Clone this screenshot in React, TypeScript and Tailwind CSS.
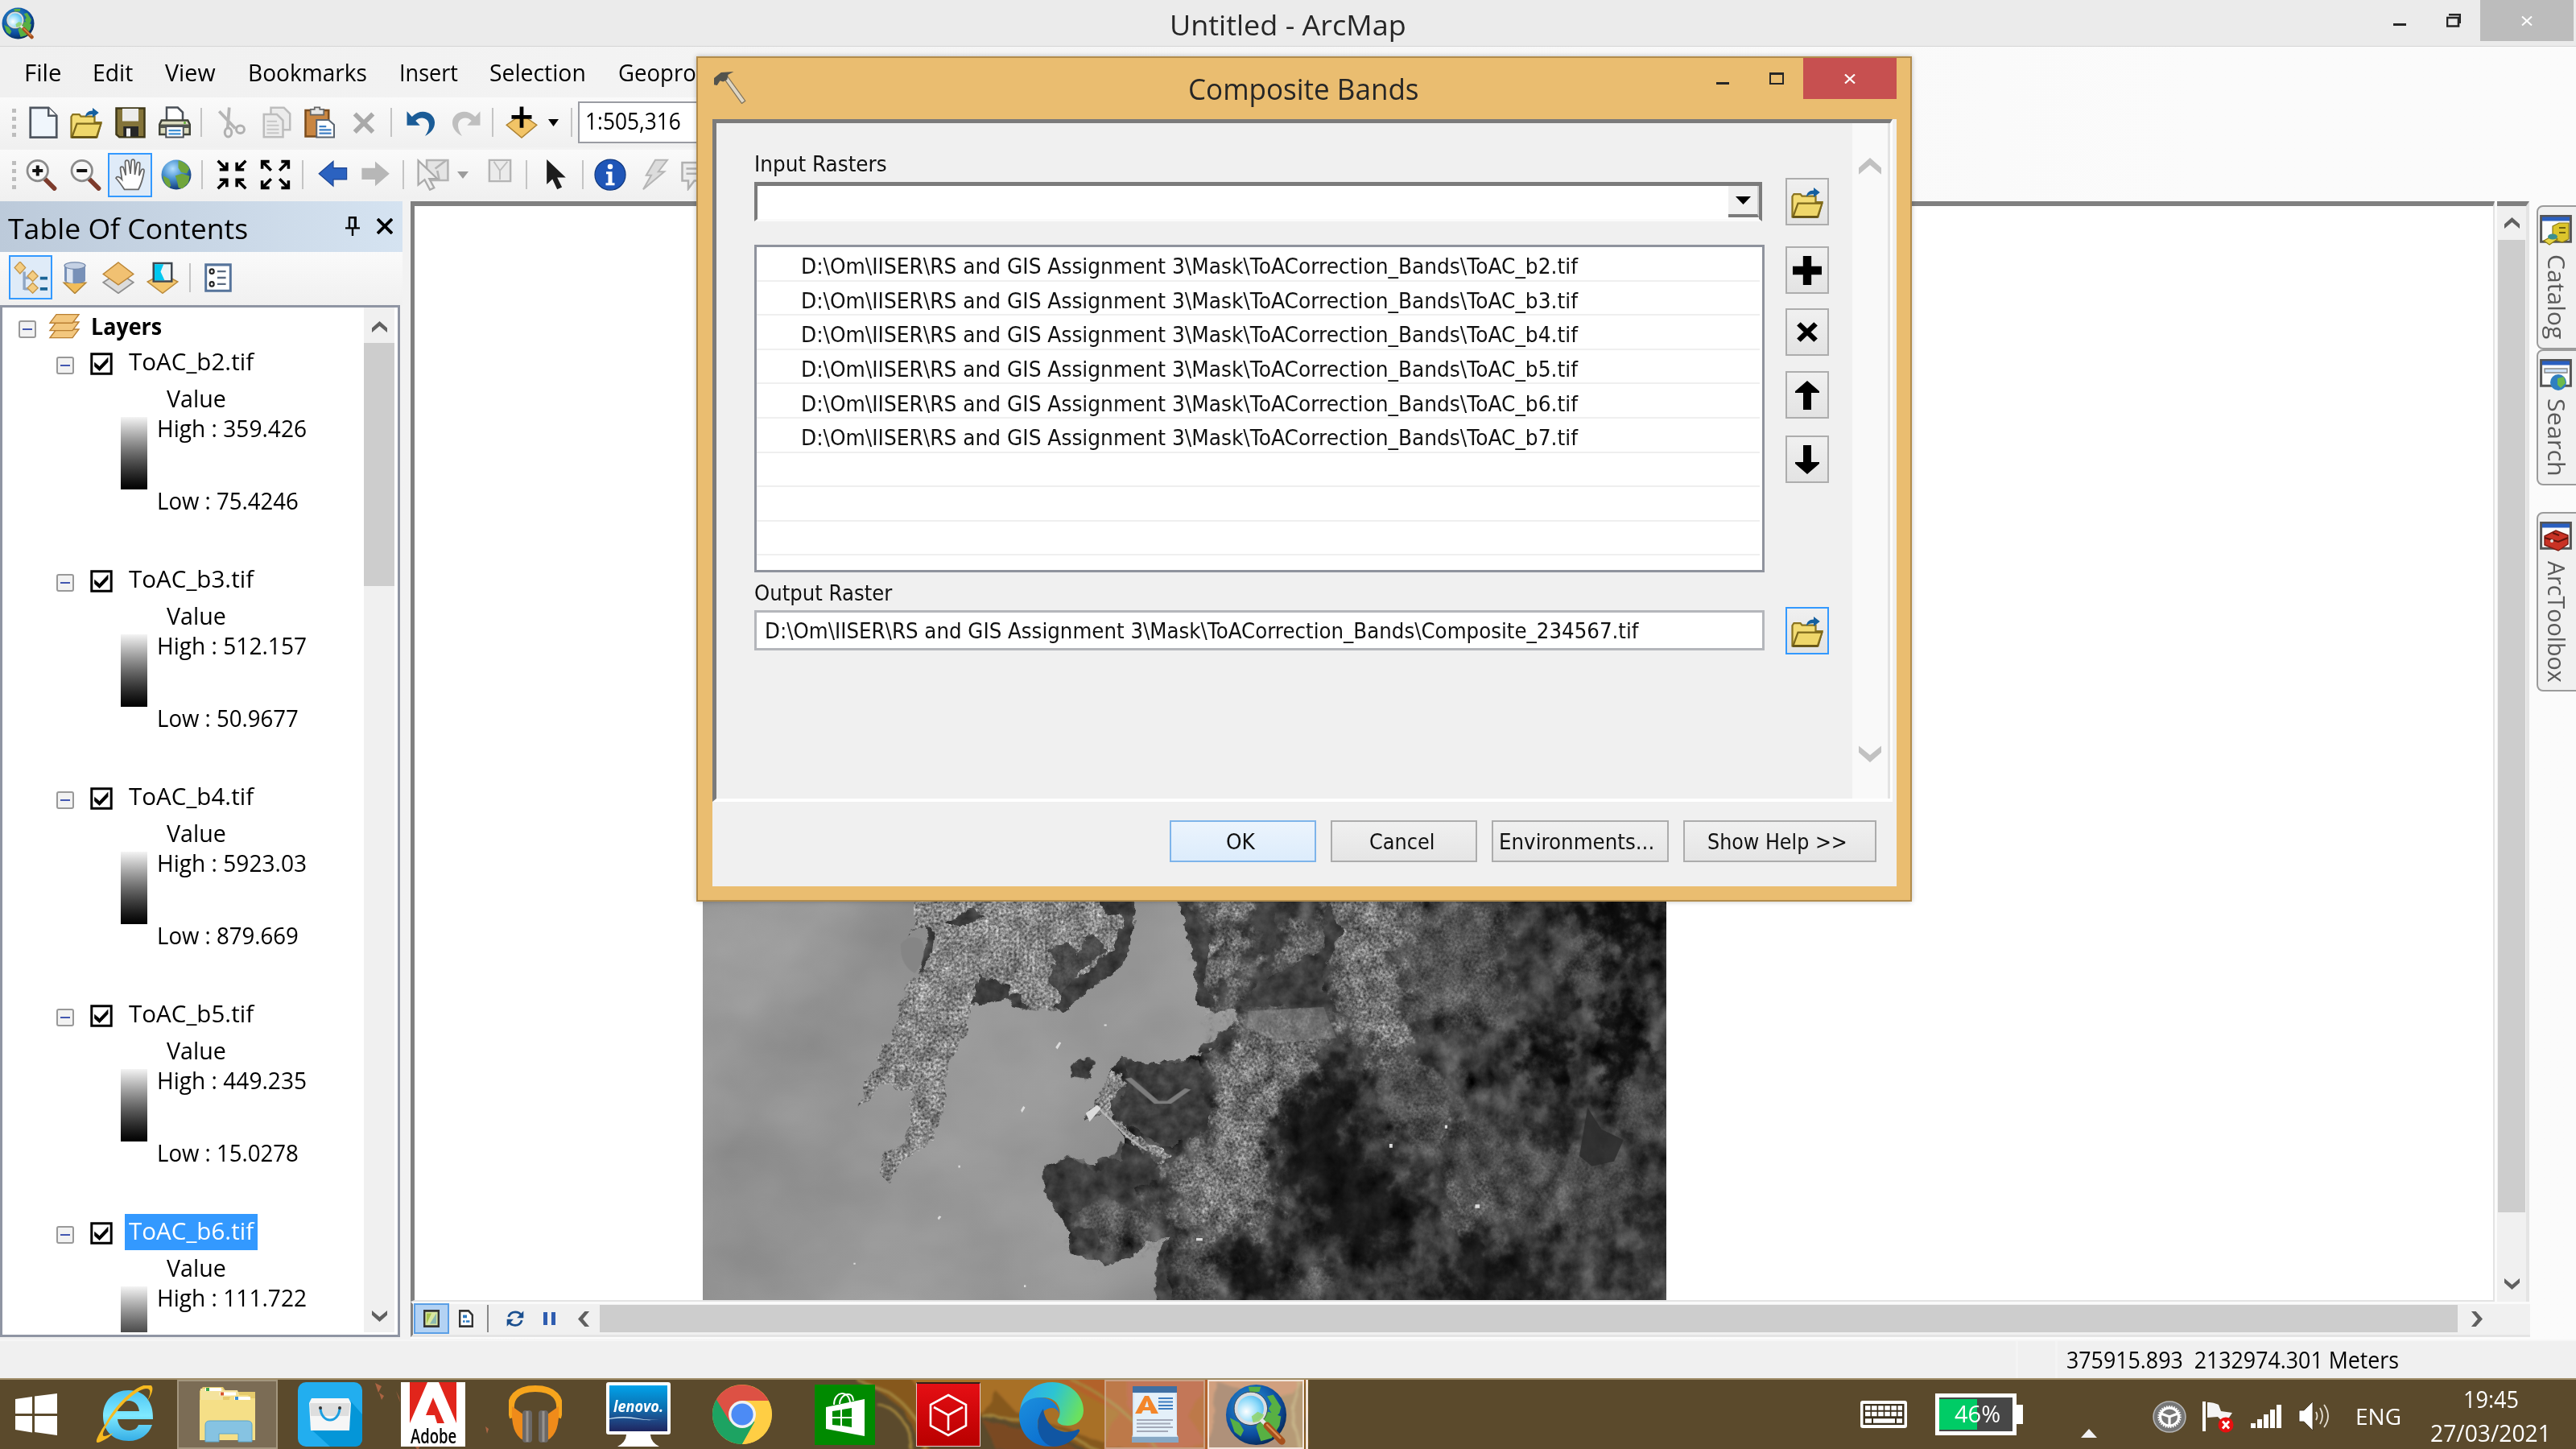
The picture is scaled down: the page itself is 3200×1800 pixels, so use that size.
import React, { useLayoutEffect, useRef } from 'react';

const UI = "font-['Open_Sans','Noto_Sans',sans-serif]";
const TAHOMA = "font-['DejaVu_Sans',sans-serif]";

/* Single line of text condensed or widened to an exact measure. */
function Fit({ w, className = '', children }: { w: number; className?: string; children: React.ReactNode }) {
  const ref = useRef<HTMLSpanElement>(null);
  useLayoutEffect(() => {
    const el = ref.current;
    if (el) el.style.transform = `scaleX(${w / el.offsetWidth})`;
  }, [w]);
  return (
    <span className={`block shrink-0 whitespace-pre ${className}`} style={{ width: w }}>
      <span ref={ref} className="inline-block origin-left">{children}</span>
    </span>
  );
}

function Svg({ className = '', vb = '0 0 16 16', children }: { className?: string; vb?: string; children: React.ReactNode }) {
  return (
    <svg viewBox={vb} preserveAspectRatio="none" className={`block shrink-0 ${className}`}>
      {children}
    </svg>
  );
}

const Sep = ({ className = '' }: { className?: string }) => <div className={`w-[2px] h-[36px] shrink-0 bg-[#c4c4c4] ${className}`} />;

const Grip = () => (
  <div className="flex w-[5px] shrink-0 flex-col gap-[5px] ml-[15px]">
    {[0, 1, 2, 3].map((i) => <div key={i} className="h-[5px] w-[5px] bg-[#bdbdbd]" />)}
  </div>
);

const Folder = ({ className = '' }: { className?: string }) => (
  <Svg className={className}>
    <path d="M.6 15.3V5.2L1.4 4h3.2l.8 1h6.8v3H15.4l-2 7.3z" fill="#f3dc74" stroke="#8a7420" strokeWidth=".9" />
    <path d="M1 15.2L3.4 8.600H15.400L13.200 15.200z" fill="#efd76a" stroke="#7d681a" strokeWidth=".9" />
    <path d="M.7 15.400H13.300" stroke="#5e4d10" strokeWidth=".9" />
    <path d="M7.6 5.4c.1-2 1.4-3.2 3.6-3.2V.8L14.3 3.2 11.2 5.6V4.1c-1.700-.1-2.600.3-3.600 1.300z" fill="#145f9f" />
  </Svg>
);

const Globe = ({ id }: { id: string }) => (
  <>
    <defs>
      <radialGradient id={id} cx=".38" cy=".3" r=".75">
        <stop offset="0" stopColor="#b4e0ff" /><stop offset=".45" stopColor="#4a93d2" /><stop offset="1" stopColor="#0b2f6e" />
      </radialGradient>
    </defs>
    <circle cx="8" cy="8" r="7.400" fill={`url(#${id})`} />
    <path d="M9 1c2 .2 4.500 1.800 5.500 4l-1.300 2.400-2.800-.6-1.400-2.200z M7.500 8.500l3.300-1 3.800 1.200-.6 3.300-2.900 2.900-2-.4-.6-2.800z M1.500 8.500l3 1.700.8 3.300-.9.900C2.500 13 1.500 11 1.500 8.500z" fill="#6fa53c" />
  </>
);

const ArcGlobe = ({ className, id }: { className: string; id: string }) => (
  <Svg className={className} vb="0 0 40 40">
    <defs>
      <radialGradient id={id} cx=".4" cy=".35" r=".7"><stop offset="0" stopColor="#2b9be0" /><stop offset=".7" stopColor="#0c4b9c" /><stop offset="1" stopColor="#05254f" /></radialGradient>
      <radialGradient id={`${id}l`} cx=".35" cy=".6" r=".7"><stop offset="0" stopColor="#fff" /><stop offset=".6" stopColor="#8ddafa" /><stop offset="1" stopColor="#46b2ea" /></radialGradient>
    </defs>
    <circle cx="20" cy="20" r="19.500" fill={`url(#${id})`} />
    <path d="M27 8l4-1 5 8-1 4-3 3-4-6 2-3zM23 20l5-2 8 3-1 6-5 8-7 2-3-9zM3 22l6 3 3 5-2 4-4-3zM15 2l8 0-1 3-6 1z" fill="#58b043" />
    <circle cx="16.500" cy="16" r="9.500" fill={`url(#${id}l)`} stroke="#d9dde0" strokeWidth="2.200" />
    <path d="M17 21l4-3 4 2-2 4-5 1z" fill="#8fd25e" opacity=".8" />
    <circle cx="16.500" cy="16" r="10.800" fill="none" stroke="#454b52" strokeWidth=".5" />
    <path d="M23 23l4 4" stroke="#e6e6e6" strokeWidth="2.600" />
    <path d="M27 27l9.500 10" stroke="#a6501c" strokeWidth="4.600" strokeLinecap="round" />
    <path d="M27 26.500l8.500 8.500" stroke="#dd8f52" strokeWidth="1.200" strokeLinecap="round" />
  </Svg>
);

function Magnifier({ className = '', plus }: { className?: string; plus?: boolean }) {
  return (
    <Svg className={className}>
      <path d="M10 10.200l4.600 4.600" stroke="#7d3b2c" strokeWidth="2.300" strokeLinecap="round" />
      <circle cx="6.300" cy="6" r="5.100" fill="#f7f7f7" stroke="#8b8b8b" strokeWidth="1.100" />
      <path d={plus ? 'M3.700 6h5.200M6.300 3.400v5.200' : 'M3.700 6h5.200'} stroke="#111" strokeWidth="1.600" />
    </Svg>
  );
}

const corner = 'M.3 .3L4.500 4.500M5 1.200V5H1.200';
function TopToolbar() {
  return (
    <div className="flex h-[62px] w-full items-center bg-linear-to-b from-[#fafafa] to-[#f0f0f0]">
      <Grip />
      <Svg className="ml-[14px] h-[40px] w-[40px]"><path d="M1.500 .7h9l4 4v10.700h-13z" fill="#f0f6fc" stroke="#4f5660" strokeWidth="1.100" /><path d="M10.500 .7v4h4" fill="#fff" stroke="#4f5660" /></Svg>
      <Folder className="ml-[13px] h-[40px] w-[40px]" />
      <Svg className="ml-[15px] h-[40px] w-[40px]"><path d="M1 1h14v14.300H2.500L1 14z" fill="#84743a" stroke="#3f3818" /><path d="M4 1.200h8v6.200H4z" fill="#ececec" /><path d="M4.500 10h7.500v5H4.500z" fill="#262626" /><path d="M6 11h2v4H6z" fill="#eee" /></Svg>
      <Svg className="ml-[15px] h-[40px] w-[40px]"><path d="M4 .6h5.500L12 3v5H4z" fill="#fff" stroke="#4a5058" /><path d="M1.500 7h13l1 2v5h-15V9z" fill="#dcdcc0" stroke="#3f4238" /><path d="M.7 9h14.600v1.800H.7z" fill="#53564c" /><circle cx="13" cy="8.200" r=".6" fill="#5cb52e" /><path d="M3.700 10h8.600v5.400H3.700z" fill="#fff" stroke="#4a5058" strokeWidth=".8" /><path d="M5 12h6M5 13.700h6" stroke="#3f8fd3" strokeWidth=".9" /></Svg>
      <Sep className="ml-[12px]" />
      <Svg className="ml-[15px] h-[40px] w-[40px]"><path d="M2.500 2.500l8 8.500M7.500 .6L6.700 11" stroke="#b5b5b5" strokeWidth="1.500" fill="none" /><ellipse cx="7" cy="13" rx="1.700" ry="2.200" fill="none" stroke="#b0b0b0" strokeWidth="1.200" /><ellipse cx="13" cy="11.500" rx="2" ry="1.900" fill="none" stroke="#b0b0b0" strokeWidth="1.200" /></Svg>
      <Svg className="ml-[18px] h-[40px] w-[40px]"><path d="M5 .7h6.500l3 3v8H5z" fill="#ececec" stroke="#bdbdbd" /><path d="M1.500 4H8l3 3v8.300H1.500z" fill="#ececec" stroke="#bdbdbd" /><path d="M3 7.500h5M3 9.500h6M3 11.500h6M3 13.300h6" stroke="#c6c6c6" strokeWidth=".8" /></Svg>
      <Svg className="ml-[13px] h-[40px] w-[40px]"><path d="M1 2h11.500v13H1z" fill="#c98642" stroke="#7b4c1d" /><path d="M3.500 1.500h2V.5h2.600v1h2v2.700H3.500z" fill="#e6e6e6" stroke="#666" strokeWidth=".7" /><path d="M6.500 6.800h6l2.700 2.400v6.200H6.500z" fill="#fff" stroke="#5a6470" strokeWidth=".8" /><path d="M7.800 10h3.500M7.800 11.700h6M7.800 13.400h6" stroke="#3f7fc4" strokeWidth=".9" /></Svg>
      <Svg className="ml-[15px] h-[40px] w-[40px]"><path d="M3.500 3.800l9 9M12.500 3.800l-9 9" stroke="#a9a9a9" strokeWidth="2.300" /></Svg>
      <Sep className="ml-[13px]" />
      <Svg className="ml-[16px] h-[40px] w-[40px]"><path d="M1 2.500v7h6.500L5.300 7.200C8 4.500 12 6 12 9.500c0 2-.8 3.400-2 5.300 3-1.600 5-4 4.800-7C14.500 3 8 .5 3.500 5.200z" fill="#1b5c97" /></Svg>
      <Svg className="ml-[16px] h-[40px] w-[40px]"><path d="M15 2.500v7H8.500l2.200-2.300C8 4.500 4 6 4 9.500c0 2 .8 3.400 2 5.300-3-1.600-5-4-4.800-7C1.500 3 8 .5 12.500 5.200z" fill="#bfbfbf" /></Svg>
      <Sep className="ml-[12px]" />
      <Svg className="ml-[15px] h-[40px] w-[40px]"><path d="M8 4l7.500 5.300L8 15.600.5 9.300z" fill="#f2c467" stroke="#ad8232" strokeWidth=".6" /><path d="M8 .2v10.500M3 5.300h10" stroke="#000" strokeWidth="1.900" /></Svg>
      <Svg className="ml-[13px] h-[9px] w-[13px]" vb="0 0 10 6"><path d="M0 0h10L5 6z" fill="#000" /></Svg>
      <Sep className="ml-[15px]" />
      <div className="ml-[7px] flex h-[52px] w-[300px] shrink-0 items-center border-2 border-[#9a9ca3] bg-white pl-[7px] text-[30px] leading-[44px]">
        <Fit w={119} className="-mt-[4px]">1:505,316</Fit>
      </div>
    </div>
  );
}

function ToolsToolbar() {
  return (
    <div className="mt-[3px] flex h-[62px] w-full items-center bg-linear-to-b from-[#fafafa] to-[#f0f0f0]">
      <Grip />
      <Magnifier plus className="ml-[11px] h-[40px] w-[40px]" />
      <Magnifier className="ml-[15px] h-[40px] w-[40px]" />
      <div className="ml-[8px] flex h-[55px] w-[55px] shrink-0 items-center justify-center border-2 border-[#3399ff] bg-[#dfebf8]">
        <Svg className="h-[40px] w-[40px]"><path d="M5 15.300C3.500 13 2 11 .8 9.700c.4-1 1.600-.9 3 .7L3 5c0-1.300 1.400-1.300 1.700 0l1 3.300-.3-6.500c.1-1.300 1.600-1.300 1.800 0L8 7.600l.5-6.300C8.700.1 10 .2 10.100 1.400L10.200 8l1-5.400c.3-1.100 1.600-.9 1.500.3l-.4 5.600 1.100-2.700c.5-1 1.600-.6 1.400.5-.6 3.500-1.400 6.500-2.800 9z" fill="#fff" stroke="#666" strokeWidth=".7" /></Svg>
      </div>
      <Svg className="ml-[10px] h-[40px] w-[40px]"><Globe id="gTool" /></Svg>
      <Sep className="ml-[11px]" />
      {[true, false].map((inward) => (
        <Svg key={String(inward)} className={inward ? 'ml-[17px] h-[38px] w-[38px]' : 'ml-[16px] h-[38px] w-[38px]'} vb="0 0 16 16">
          <g fill="none" stroke="#000" strokeWidth="1.500">
            {inward ? (
              <><path d={corner} transform="translate(.4 .4)" /><path d={corner} transform="matrix(-1 0 0 1 15.600 .4)" /><path d={corner} transform="matrix(1 0 0 -1 .4 15.600)" /><path d={corner} transform="matrix(-1 0 0 -1 15.600 15.600)" /></>
            ) : (
              <><path d={corner} transform="matrix(-1 0 0 -1 6.100 6.100)" /><path d={corner} transform="matrix(1 0 0 -1 9.900 6.100)" /><path d={corner} transform="matrix(-1 0 0 1 6.100 9.900)" /><path d={corner} transform="translate(9.900 9.900)" /></>
            )}
          </g>
        </Svg>
      ))}
      <Sep className="ml-[14px]" />
      <Svg className="ml-[18px] h-[38px] w-[38px]"><path d="M.5 7.500L8 1v3.500h7v6H8v3.500z" fill="#2b62c0" stroke="#1c4594" strokeWidth=".5" /></Svg>
      <Svg className="ml-[14px] h-[38px] w-[38px]"><path d="M15.500 7.500L8 1v3.500H1v6h7v3.500z" fill="#b7b7b7" /></Svg>
      <Sep className="ml-[15px]" />
      <Svg className="ml-[15px] h-[40px] w-[42px]"><path d="M5 .8h10v10H5z" fill="#e4e4e4" stroke="#b4b4b4" /><path d="M9 5l5-4M10 6l1 5" stroke="#b4b4b4" /><path d="M1 1v12l3-2.500 2.500 5 2-1L6.200 10H10z" fill="#efefef" stroke="#aaa" strokeWidth=".9" /></Svg>
      <Svg className="ml-[9px] h-[9px] w-[14px]" vb="0 0 10 6"><path d="M0 0h10L5 6z" fill="#9c9c9c" /></Svg>
      <Svg className="ml-[24px] mb-[10px] h-[30px] w-[30px]"><path d="M1 1h14v14H1z" fill="#ebebeb" stroke="#b4b4b4" strokeWidth="1.300" /><path d="M4 2l4 6 5-6M8 8v6" stroke="#bdbdbd" fill="none" /></Svg>
      <Sep className="ml-[17px]" />
      <Svg className="ml-[23px] h-[38px] w-[26px]" vb="0 0 11 16"><path d="M.5 0v13l3-2.700L6 15.700l2.500-1.200L6 9.500h4.500z" fill="#1d1d1d" /></Svg>
      <Sep className="ml-[19px]" />
      <Svg className="ml-[13px] h-[40px] w-[40px]"><circle cx="8" cy="8" r="7.600" fill="#1f56b8" stroke="#123a80" strokeWidth=".5" /><circle cx="8" cy="4" r="1.300" fill="#fff" /><path d="M6 6.500h3v5.600h1.200v1.200H5.800v-1.200H7V7.700H6z" fill="#fff" /></Svg>
      <Svg className="ml-[16px] h-[40px] w-[40px]"><path d="M8 .7h6L9.500 6.500h3L2 15.300 6 8.300H3.500z" fill="#dcdcdc" stroke="#b5b5b5" strokeWidth=".8" /></Svg>
      <Svg className="ml-[11px] h-[40px] w-[40px]"><path d="M1 2h13v9H7l-3 4v-4H1z" fill="#ececec" stroke="#b0b0b0" /><path d="M3 5h8M3 7.500h8" stroke="#b0b0b0" /></Svg>
    </div>
  );
}

const Minus = ({ className = '' }: { className?: string }) => (
  <div className={`flex h-[22px] w-[22px] shrink-0 items-center justify-center rounded-[3px] border-2 border-[#999] bg-[#f2f2f2] ${className}`}>
    <div className="h-[2px] w-[12px] bg-[#4257b0]" />
  </div>
);

const Chevron = ({ className = '', color = '#606060' }: { className?: string; color?: string }) => (
  <Svg className={className} vb="0 0 20 16"><path d="M0 15V9L10 0l10 9v6L10 6.500z" fill={color} /></Svg>
);

const layers = [
  { name: 'ToAC_b2.tif', high: '359.426', low: '75.4246' },
  { name: 'ToAC_b3.tif', high: '512.157', low: '50.9677' },
  { name: 'ToAC_b4.tif', high: '5923.03', low: '879.669' },
  { name: 'ToAC_b5.tif', high: '449.235', low: '15.0278' },
  { name: 'ToAC_b6.tif', high: '111.722', low: '', selected: true },
];

function Toc() {
  return (
    <div className="flex w-[500px] shrink-0 flex-col">
      <div className="flex h-[63px] shrink-0 items-center bg-linear-to-r from-[#bccada] to-[#d5e3f1] pl-[10px] text-[35px] leading-[60px]">
        <Fit w={298} className="pt-[4px]">Table Of Contents</Fit>
        <Svg className="ml-[121px] mb-px h-[24px] w-[18px]" vb="0 0 9 12"><path d="M2.500 0v7M6.300 0v7M2.500.6h4M0 7.200h9M4.500 7v5" stroke="#000" strokeWidth="1.200" fill="none" /><path d="M5.400 0h1.500v7H5.400z" /></Svg>
        <Svg className="ml-[21px] mb-px h-[20px] w-[20px]" vb="0 0 10 10"><path d="M.5.5l9 9M9.500.5l-9 9" stroke="#000" strokeWidth="1.900" /></Svg>
      </div>
      <div className="flex h-[66px] shrink-0 items-center bg-linear-to-b from-[#fafafa] to-[#f0f0f0] pb-[3px] pl-[11px]">
        <div className="flex h-[55px] w-[54px] items-center justify-center border-2 border-[#3399ff] bg-[#dfebf8]">
          <Svg className="h-[40px] w-[42px]"><path d="M5 5v9M5 8h4M5 13.500h4" stroke="#8fa6c4" strokeWidth="1.300" fill="none" /><g fill="#f4cd82" stroke="#c4964a" strokeWidth=".5"><path d="M3 0l2.600 3L3 6 .4 3z" /><path d="M9 4.500l2.500 2.700L9 9.800 6.500 7.200z" /><path d="M9 10.500l2.500 2.600L9 15.700l-2.500-2.600z" /></g><path d="M12.500 8.200H16M12.500 13.500H16" stroke="#1a6496" strokeWidth="1.500" /></Svg>
        </div>
        <Svg className="ml-[8px] h-[40px] w-[40px]"><path d="M2.500 10.500h11L8 15.800z" fill="#f1bd5a" stroke="#b18436" strokeWidth=".6" /><path d="M2.800 2v7.500c1 1.800 9.400 1.800 10.400 0V2z" fill="#7891b8" /><path d="M4 2.500v7.500c1 .5 2 .6 3 .7V3z" fill="#dde5f0" /><ellipse cx="8" cy="2" rx="5.200" ry="1.700" fill="#c5d1e4" stroke="#7388aa" strokeWidth=".5" /></Svg>
        <Svg className="ml-[14px] h-[40px] w-[40px]"><path d="M8 5.500l7.500 4.800L8 15.700.5 10.300z" fill="#dcdcdc" stroke="#8f8f8f" strokeWidth=".7" /><path d="M8 .4l7.500 5.800L8 11.500.5 6.200z" fill="#f1c172" stroke="#bb8637" strokeWidth=".6" /></Svg>
        <Svg className="ml-[15px] h-[40px] w-[40px]"><path d="M8 6l7.500 4L8 15.700.5 10z" fill="#f3c66d" stroke="#b98a3b" strokeWidth=".6" /><path d="M3.500.8h9v9h-9z" fill="#eef4f6" stroke="#3f4750" strokeWidth="1" /><path d="M4 1.300h4.500L7 5l2 4.300H4z" fill="#00c8f0" /></Svg>
        <Sep className="ml-[13px]" />
        <Svg className="ml-[17px] h-[36px] w-[34px]"><path d="M.8.8h14.400v14.400H.8z" fill="#fff" stroke="#56749b" strokeWidth="1.400" /><circle cx="4.300" cy="4.500" r="1.200" fill="none" stroke="#222" /><circle cx="4.300" cy="11.500" r="1.200" fill="none" stroke="#222" /><path d="M7.500 4.500h5M7.500 8h5M7.500 11.500h5" stroke="#5a6a80" strokeWidth="1.100" /></Svg>
      </div>
      <div className="flex h-[1282px] w-[497px] shrink-0 border-[3px] border-[#8f95a3] bg-white">
        <div className="flex h-[1273px] min-w-0 flex-1 flex-col overflow-hidden text-[29px] leading-[32px]">
          <div className="flex h-[46px] shrink-0 items-center pl-[20px]">
            <Minus className="mt-[8px]" />
            <Svg className="ml-[15px] h-[32px] w-[40px]" vb="0 0 20 16"><g fill="#f3c77e" stroke="#b97f32" strokeWidth=".7"><path d="M5 10h14l-4 5.300H1z" /><path d="M5 5.500h14l-4 5.300H1z" /><path d="M5 .8h14l-4 5.300H1z" /></g></Svg>
            <Fit w={88} className="ml-[13px] font-bold">Layers</Fit>
          </div>
          {layers.map((l) => (
            <div key={l.name} className="flex h-[270px] shrink-0 flex-col">
              <div className="flex h-[45px] shrink-0 items-center pl-[67px]">
                <Minus className="mt-[7px]" />
                <Svg className="mt-[2px] ml-[20px] h-[28px] w-[28px]" vb="0 0 14 14"><path d="M.9.9h12.200v12.200H.9z" fill="#fff" stroke="#000" strokeWidth="1.500" /><path d="M2.800 6.200l3 2.600 5.200-5.600v2.600L5.800 11.300l-3-2.700z" stroke="#000" strokeWidth=".4" /></Svg>
                <div className={l.selected ? 'ml-[15px] h-[45px] w-[165px] bg-[#3399ff] pl-[5px] leading-[42px] text-white' : 'ml-[15px] h-[45px] w-[165px] pl-[5px] leading-[42px]'}>
                  <Fit w={155}>{l.name}</Fit>
                </div>
              </div>
              <div className="flex h-[43px] shrink-0 items-center pl-[204px]"><Fit w={74}>Value</Fit></div>
              <div className="flex pl-[147px]">
                <div className="mt-[2px] h-[90px] w-[33px] border-b-2 border-black bg-linear-to-b from-[#f4f4f4] via-[#6e6e6e] to-[#050505]" />
                <div className="ml-[12px] flex flex-col">
                  <Fit w={186}>{`High : ${l.high}`}</Fit>
                  {l.low && <Fit w={176} className="mt-[58px]">{`Low : ${l.low}`}</Fit>}
                </div>
              </div>
            </div>
          ))}
        </div>
        <div className="mr-[4px] flex h-[1273px] w-[38px] shrink-0 flex-col items-center bg-[#f0f0f0]">
          <Chevron className="mt-[17px] h-[15px] w-[19px]" />
          <div className="mt-[12px] h-[302px] w-full bg-[#cdcdcd]" />
          <Chevron className="mt-auto mb-[13px] h-[15px] w-[19px] rotate-180" />
        </div>
      </div>
    </div>
  );
}

/* Grayscale satellite raster: coastline polygons filled by noise textures. */
function Raster() {
  const geo = 'scale(.7839 .3338) translate(-16 -30)';
  return (
    <svg viewBox="0 0 1197 496" className="block h-[496px] w-[1197px] shrink-0">
      <defs>
        <linearGradient id="sea" x1="0" x2="1" y1="0" y2=".3"><stop offset="0" stopColor="#919191" /><stop offset=".12" stopColor="#9c9c9c" /><stop offset=".2" stopColor="#8e8e8e" /><stop offset=".4" stopColor="#9b9b9b" /><stop offset="1" stopColor="#909090" /></linearGradient>
        <filter id="seaTex" x="0" y="0" width="1" height="1" colorInterpolationFilters="sRGB">
          <feTurbulence type="fractalNoise" baseFrequency=".005 .007" numOctaves="4" seed="4" />
          <feColorMatrix values=".5 0 0 0 .35 .5 0 0 0 .35 .5 0 0 0 .35 0 0 0 0 1" />
        </filter>
        <filter id="urban" x="-.05" y="-.05" width="1.100" height="1.100" colorInterpolationFilters="sRGB">
          <feTurbulence type="fractalNoise" baseFrequency=".06" numOctaves="3" seed="3" result="d" />
          <feDisplacementMap in="SourceGraphic" in2="d" scale="16" xChannelSelector="R" yChannelSelector="G" result="s" />
          <feTurbulence type="fractalNoise" baseFrequency=".31 .29" numOctaves="2" seed="11" />
          <feColorMatrix values=".85 .3 0 0 .02 .85 .3 0 0 .02 .85 .3 0 0 .02 0 0 0 0 1" result="f" />
          <feTurbulence type="fractalNoise" baseFrequency=".05 .04" numOctaves="3" seed="31" />
          <feColorMatrix values=".9 0 0 0 .05 .9 0 0 0 .05 .9 0 0 0 .05 0 0 0 0 1" result="c" />
          <feComposite in="f" in2="c" operator="arithmetic" k1=".6" k2=".5" k3=".1" result="n" />
          <feComposite in="n" in2="s" operator="in" />
        </filter>
        <filter id="soft" x="-.2" y="-.2" width="1.400" height="1.400" colorInterpolationFilters="sRGB">
          <feGaussianBlur in="SourceGraphic" stdDeviation="10" result="b" />
          <feTurbulence type="fractalNoise" baseFrequency=".05" numOctaves="5" seed="8" result="d" />
          <feDisplacementMap in="b" in2="d" scale="80" xChannelSelector="R" yChannelSelector="G" result="s" />
          <feTurbulence type="fractalNoise" baseFrequency=".29 .27" numOctaves="2" seed="21" />
          <feColorMatrix values=".85 .3 0 0 -.03 .85 .3 0 0 -.03 .85 .3 0 0 -.03 0 0 0 0 1" result="f" />
          <feTurbulence type="fractalNoise" baseFrequency=".05 .04" numOctaves="3" seed="37" />
          <feColorMatrix values="1 0 0 0 0 1 0 0 0 0 1 0 0 0 0 0 0 0 0 1" result="c" />
          <feComposite in="f" in2="c" operator="arithmetic" k1=".7" k2=".45" k3=".1" result="n" />
          <feComposite in="n" in2="s" operator="in" />
        </filter>
        <filter id="hills" x="-.05" y="-.05" width="1.100" height="1.100" colorInterpolationFilters="sRGB">
          <feTurbulence type="fractalNoise" baseFrequency=".06" numOctaves="3" seed="3" result="d" />
          <feDisplacementMap in="SourceGraphic" in2="d" scale="14" xChannelSelector="R" yChannelSelector="G" result="s" />
          <feTurbulence type="fractalNoise" baseFrequency=".035 .03" numOctaves="6" seed="17" />
          <feColorMatrix values=".42 .28 0 0 -.11 .42 .28 0 0 -.11 .42 .28 0 0 -.11 0 0 0 0 1" result="n" />
          <feComposite in="n" in2="s" operator="in" />
        </filter>
        <filter id="marsh" x="-.1" y="-.1" width="1.200" height="1.200" colorInterpolationFilters="sRGB">
          <feTurbulence type="fractalNoise" baseFrequency=".07" numOctaves="3" seed="6" result="d" />
          <feDisplacementMap in="SourceGraphic" in2="d" scale="14" xChannelSelector="R" yChannelSelector="G" result="s" />
          <feTurbulence type="fractalNoise" baseFrequency=".06" numOctaves="4" seed="2" />
          <feColorMatrix values=".25 0 0 0 .12 .25 0 0 0 .12 .25 0 0 0 .12 0 0 0 0 1" result="n" />
          <feComposite in="n" in2="s" operator="in" />
        </filter>
        <filter id="shade" x="-.3" y="-.3" width="1.600" height="1.600">
          <feGaussianBlur in="SourceGraphic" stdDeviation="12" result="b" />
          <feTurbulence type="fractalNoise" baseFrequency=".035" numOctaves="6" seed="9" result="d" />
          <feDisplacementMap in="b" in2="d" scale="110" xChannelSelector="R" yChannelSelector="G" />
        </filter>
        <clipPath id="frame"><rect width="1197" height="496" /></clipPath>
      </defs>
      <g clipPath="url(#frame)">
        <rect width="1197" height="496" fill="url(#sea)" />
        <rect width="1197" height="496" filter="url(#seaTex)" opacity=".25" />
        <g filter="url(#hills)"><g transform={geo}>
          <path d="M765 0L790 90 800 300 800 400 825 440 860 440 865 480 835 540 825 580 780 625 750 620 715 655 680 610 665 650 640 780 620 850 650 820 685 910 680 990 655 985 640 1010 595 975 560 1025 560 1120 590 1240 600 1350 635 1365 655 1385 700 1350 720 1300 755 1280 735 1350 735 1560H1600V0z" />
        </g></g>
        <g filter="url(#soft)" opacity=".9"><g transform={geo}>
          <path d="M810 0H880V330L860 430H835L825 300zM940 150L1000 110 1000 230 930 300zM1020 0H1140L1120 250 1130 480 1140 650 1060 600 1010 340zM830 600L870 500 1000 560 980 680 910 860 910 1240 790 1240 750 1060 810 900z" />
          <path d="M870 430H1010V560H880zM600 1180L700 1130 760 1200 700 1310 630 1310zM760 1000H920V1280H770z" opacity=".5" />
          <path d="M1090 640L1220 700 1200 960 1100 900zM1200 1100L1280 1060 1270 1250 1200 1260zM1130 30H1300L1280 300 1300 480 1140 500z" opacity=".4" />
          <path d="M1400 100L1480 180 1440 380 1350 330zM1180 800L1500 1000 1480 1250 1200 1230zM1470 700H1543V900H1450z" opacity=".25" />
          <path d="M770 1290H830V1516H780zM960 1390H1010L1000 1516H950z" opacity=".5" />
        </g></g>
        <g filter="url(#shade)" opacity=".8"><g transform={geo} fill="#060606">
          <path d="M1330 0H1600V130L1500 160 1480 330 1440 130z" />
          <path d="M1470 340L1530 380 1510 480 1480 720 1430 690 1440 440zM1330 500L1400 520 1380 690 1310 660z" />
          <path d="M930 780L1000 620 1060 660 1040 800 1060 1000 1150 1010 1130 1350 1080 1370 990 1280 930 1000z" opacity=".75" />
          <path d="M840 1300L960 1290 930 1516H840zM1210 1280L1300 1330 1370 1560H1190z" opacity=".7" />
          <path d="M1500 1050L1543 1100V1400L1510 1280zM1360 760L1400 780 1370 960 1330 900z" opacity=".6" />
        </g></g>
        <g filter="url(#urban)"><g transform={geo}>
          <path d="M348 0L350 130 340 165 375 120 388 150 376 270 352 312 330 400 320 520 296 590 292 640 270 720 266 800 285 740 315 705 345 760 348 850 338 930 297 980 298 1050 312 1090 328 1010 375 930 395 850 405 640 435 520 440 430 470 390 500 340 520 440 580 435 640 330 680 270 700 100 690 0z" />
          <path d="M665 660L690 700 660 780 700 900 760 980 740 1010 690 920 650 820 628 850 640 760z" />
        </g></g>
        <g filter="url(#marsh)"><g transform={geo}>
          <path d="M640 0L705 20 695 180 682 270 640 340 590 438 575 430 600 330 640 270 665 210 685 90 655 80z" />
          <path d="M560 210L595 180 610 240 625 140 650 180 655 230 620 270 590 400 565 330 575 260z" opacity=".85" />
          <path d="M455 310L500 340 500 390 440 420 450 360zM498 380L520 370 530 440 510 430zM372 120L385 150 376 250 360 300 366 200zM400 110L440 60 460 90 420 130z" />
          <path d="M765 0L790 60 820 160 810 340 830 430 800 420 795 250zM860 420L900 330 1000 210 1005 20 1030 150 1000 270 1000 380 1040 470 1010 430z" />
          <path d="M885 60H925L920 220 890 230z" opacity=".6" />
          <path d="M680 620L750 640 800 620 810 700 820 880 750 950 700 870 665 840 680 750 700 720 690 680z" />
          <path d="M680 930L740 980 740 1060 700 1100 720 1200 650 1120 600 1200 560 1110 560 1030 600 980 640 1040 660 1000z" opacity=".75" />
          <path d="M600 650L625 605 640 630 620 700 602 690zM605 1240L640 1250 640 1360 600 1340zM755 1290L745 1360 765 1560H735V1340zM800 590L860 480 850 540 810 600z" />
        </g></g>
        <g transform={geo}>
          <path d="M330 190Q345 150 362 175Q375 230 352 300Q328 270 330 190z" fill="#858585" />
          <path d="M690 690L735 780H755L785 730" fill="none" stroke="#7d7d7d" strokeWidth="11" />
          <path d="M1418 800L1440 880 1475 920 1460 1000 1425 1018 1405 980z" fill="#2b2b2b" opacity=".85" />
          <path d="M880 440L1000 425 1020 540 930 560 880 500z" fill="#9a9a9a" opacity=".4" />
          <path d="M640 795L690 910 720 960" stroke="#c9c9c9" strokeWidth="4" fill="none" opacity=".7" />
          <g fill="#dcdcdc"><path d="M623 820l18-30 6 12-18 50zM575 575l6-20 3 4-6 24zM520 810l4-16 3 5-5 20zM388 1210l3-8 3 4-4 12zM525 1460h3v8h-3zM255 1377h3v6h-3zM421 1015h3v8h-3zM652 490h4v6h-4zM1240 1160h7v14h-7zM1192 865h4v12h-4zM1104 935h5v14h-5zM798 1285h10v10h-10z" /></g>
        </g>
      </g>
    </svg>
  );
}

function MapView() {
  return (
    <div className="ml-[10px] flex h-[1413px] w-[2633px] shrink-0 flex-col border-b-2 border-[#fcfcfc]">
      <div className="flex h-[1367px]">
        <div className="flex w-[2589px] shrink-0 items-end border-t-[6px] border-l-[5px] border-r-2 border-b-2 border-t-[#808080] border-l-[#808080] border-r-[#e3e3e3] border-b-[#e3e3e3] bg-white pl-[358px]">
          <Raster />
        </div>
        <div className="ml-[3px] flex w-[40px] flex-col items-center border-t-[6px] border-r-[4px] border-t-[#808080] border-r-[#e4e4e4] bg-[#f0f0f0]">
          <Chevron className="mt-[14px] h-[15px] w-[19px]" />
          <div className="mt-[13px] h-[1208px] w-[34px] bg-[#cdcdcd]" />
          <Chevron className="mt-auto mb-[15px] h-[15px] w-[19px] rotate-180" />
        </div>
      </div>
      <div className="flex h-[44px] items-center border-t-[3px] border-b-[3px] border-l-[3px] border-t-[#fafafa] border-b-[#e4e4e4] border-l-[#808080] bg-[#f0f0f0] pb-[2px]">
        <div className="ml-px flex h-[38px] w-[44px] shrink-0 items-center justify-center border-2 border-[#5a9fe6] bg-[#b3d2f3]">
          <Svg className="h-[22px] w-[20px]" vb="0 0 10 10"><path d="M.6.600h8.800v8.800H.6z" fill="#d9e7a0" stroke="#333" strokeWidth="1.200" /><path d="M2 8V2h3z" fill="#a7c34d" /><path d="M4 8l4-6v6z" fill="#8dbab0" /></Svg>
        </div>
        <Svg className="ml-[12px] h-[22px] w-[18px]" vb="0 0 9 10"><path d="M.6.600H6l2.400 2.400v6.400H.6z" fill="#fff" stroke="#333" strokeWidth="1.200" /><path d="M2.500 3h2.500v1.700H2.500zM2.500 6h1.300v1.200H2.500zM4.500 6h2.200v1.200H4.500z" fill="#2f7dc4" /></Svg>
        <div className="ml-[17px] h-[34px] w-[2px] bg-[#888]" />
        <Svg className="ml-[22px] h-[22px] w-[22px]"><g fill="none" stroke="#1a4f8f" strokeWidth="2"><path d="M2 6.500C3 3.500 5.500 2 8 2s4.500 1 5.500 3M14 9.500C13 12.500 10.500 14 8 14s-4.500-1-5.500-3" /></g><path d="M15.500 1v6.500H9.500zM.5 15V8.500h6z" fill="#1a4f8f" /></Svg>
        <div className="ml-[24px] flex gap-[5px]"><div className="h-[16px] w-[5px] bg-[#2f5db0]" /><div className="h-[16px] w-[5px] bg-[#2f5db0]" /></div>
        <Chevron className="ml-[26px] h-[15px] w-[19px] -rotate-90" />
        <div className="ml-[10px] h-[34px] w-[2308px] shrink-0 bg-[#cdcdcd]" />
        <Chevron className="ml-[14px] h-[15px] w-[19px] rotate-90" />
      </div>
    </div>
  );
}

function SideTab({ label, h, className, children }: { label: string; h: number; className: string; children: React.ReactNode }) {
  return (
    <div className={`flex w-[52px] shrink-0 flex-col rounded-l-[8px] border-[2px] border-[#9b9b9b] bg-[#f0f0f0] pt-[10px] ${className}`}>
      <Svg className="ml-[2px] h-[40px] w-[40px]" vb="0 0 20 20">
        <path d="M.8.8h18.400v15.800H.8z" fill="#fbfbfb" stroke="#555" strokeWidth="1.500" />
        <path d="M1.500 1.200h17v2.600h-17z" fill="#2a5fc0" />
        {children}
      </Svg>
      <div className="ml-[4px] mt-[9px] w-[38px] text-[29px] leading-[38px] text-[#5a5a5a] [writing-mode:vertical-rl]">
        <VFit h={h}>{label}</VFit>
      </div>
    </div>
  );
}

function VFit({ h, children }: { h: number; children: React.ReactNode }) {
  const ref = useRef<HTMLSpanElement>(null);
  useLayoutEffect(() => {
    const el = ref.current;
    if (el) el.style.transform = `scaleY(${h / el.offsetHeight})`;
  }, [h]);
  return <span ref={ref} className="inline-block origin-top whitespace-pre">{children}</span>;
}

const dlgBtn = 'flex w-[54px] h-[59px] shrink-0 items-center justify-center border-2 bg-linear-to-b from-[#f0f0f0] to-[#e3e3e3]';

function Dialog() {
  const bands = [2, 3, 4, 5, 6, 7];
  return (
    <div className="absolute top-[70px] left-[865px] flex h-[1050px] w-[1510px] flex-col border-2 border-[#b28c4c] bg-[#eabd70] shadow-[0_0_6px_rgba(0,0,0,.25)]">
      <div className="flex h-[76px] shrink-0 items-start pl-[20px] text-[#262626]">
        <Svg className="mt-[17px] h-[40px] w-[40px]"><path d="M5 3.500l1.800-1 8.700 12-1.700 1.300z" fill="#ded6c4" stroke="#7c705a" strokeWidth=".5" /><path d="M0 6.500V3.200L3.500.4 9.800 0 7 1.500 6.500 4 4.500 5 3 4.500 1.500 6.800z" fill="#53534d" /></Svg>
        <div className="ml-[549px] mt-[12px] text-[36px] leading-[54px]"><Fit w={287}>Composite Bands</Fit></div>
        <div className="mt-[30px] ml-[369px] h-[3px] w-[16px] bg-[#262626]" />
        <div className="mt-[18px] ml-[50px] h-[15px] w-[18px] border-2 border-t-[3px] border-[#262626]" />
        <div className="ml-[24px] flex h-[51px] w-[116px] items-center justify-center bg-[#c75050]">
          <Svg className="h-[12px] w-[14px]" vb="0 0 14 12"><path d="M1 .5l12 11M13 .5L1 11.500" stroke="#fff" strokeWidth="2.200" /></Svg>
        </div>
      </div>
      <div className="ml-[18px] flex h-[953px] w-[1471px] flex-col bg-[#f0f0f0]">
        <div className="flex h-[848px] w-[1466px] shrink-0 border-t-[5px] border-l-[5px] border-r-[3px] border-b-[4px] border-t-[#7b7b7b] border-l-[#7b7b7b] border-r-[#fff] border-b-[#fff]">
          <div className={`flex flex-1 flex-col pl-[47px] text-[27px] leading-[34px] ${TAHOMA} text-[#111]`}>
            <div className="mt-[34px]"><Fit w={165}>Input Rasters</Fit></div>
            <div className="flex">
              <div className="w-[1255px]">
                <div className="mt-[5px] flex h-[49px] w-[1252px] justify-end border-t-[5px] border-l-[4px] border-r-[4px] border-b-[3px] border-t-[#7b7b7b] border-l-[#7b7b7b] border-r-[#7b7b7b] border-b-[#fafafa] bg-white">
                  <div className="flex h-[39px] w-[38px] items-center justify-center border-r-[2px] border-b-[4px] border-r-[#ccc] border-b-[#7b7b7b] bg-[#f0f0f0]">
                    <Svg className="h-[10px] w-[19px]" vb="0 0 10 6"><path d="M0 0h10L5 6z" /></Svg>
                  </div>
                </div>
                <div className="mt-[29px] h-[407px] overflow-hidden border-[3px] border-[#8f939d] bg-white pr-[3px]">
                  {[...bands, 0, 0, 0].map((b, i) => (
                    <div key={i} className="flex h-[42.6px] items-center border-b-2 border-[#efefef] pl-[55px] leading-[36px]">
                      {b > 0 && <Fit w={965} className="pt-[8px]">{`D:\\Om\\IISER\\RS and GIS Assignment 3\\Mask\\ToACorrection_Bands\\ToAC_b${b}.tif`}</Fit>}
                    </div>
                  ))}
                </div>
                <div className="mt-[9px]"><Fit w={171}>Output Raster</Fit></div>
                <div className="mt-[4px] flex h-[50px] items-center border-[3px] border-[#b4b6bb] bg-white pl-[10px]"><Fit w={1085} className="pt-[2px]">{'D:\\Om\\IISER\\RS and GIS Assignment 3\\Mask\\ToACorrection_Bands\\Composite_234567.tif'}</Fit></div>
              </div>
              <div className="ml-[26px] flex flex-col">
                <div className={`${dlgBtn} border-[#adadad]`}><Folder className="h-[40px] w-[40px]" /></div>
                <div className={`${dlgBtn} mt-[26px] border-[#adadad]`}><Svg className="h-[36px] w-[36px]"><path d="M5.700 0h4.600v5.700H16v4.600h-5.700V16H5.700v-5.700H0V5.700h5.700z" /></Svg></div>
                <div className={`${dlgBtn} mt-[18px] border-[#adadad]`}><Svg className="h-[25px] w-[26px]"><path d="M1.500 1.500l13 13M14.500 1.500l-13 13" stroke="#000" strokeWidth="4" /></Svg></div>
                <div className={`${dlgBtn} mt-[19px] border-[#adadad]`}><Svg className="h-[36px] w-[30px]" vb="0 0 30 36"><path d="M15 0l15 13v2H20v21H10V15H0v-2z" /></Svg></div>
                <div className={`${dlgBtn} mt-[21px] border-[#adadad]`}><Svg className="h-[36px] w-[30px] rotate-180" vb="0 0 30 36"><path d="M15 0l15 13v2H20v21H10V15H0v-2z" /></Svg></div>
                <div className={`${dlgBtn} mt-[154px] border-[#3399ff]`}><Folder className="h-[40px] w-[40px]" /></div>
              </div>
            </div>
          </div>
          <div className="flex w-[47px] shrink-0 flex-col items-center border-r-[3px] border-r-[#e3e3e3] bg-[#f9f9f9]">
            <Chevron color="#c1c1c1" className="mt-[43px] h-[22px] w-[28px]" />
            <Chevron color="#c1c1c1" className="mt-auto mb-[45px] h-[22px] w-[28px] rotate-180" />
          </div>
        </div>
        <div className={`mt-[23px] flex pl-[568px] text-[27px] leading-[50px] ${TAHOMA} text-[#111]`}>
          <div className="flex h-[52px] w-[182px] border-2 border-[#7eb4ea] bg-linear-to-b from-[#ecf4fc] to-[#dcecfc] pl-[68px]"><Fit w={36}>OK</Fit></div>
          <div className="ml-[18px] flex h-[52px] w-[182px] border-2 border-[#acacac] bg-linear-to-b from-[#f0f0f0] to-[#e5e5e5] pl-[46px]"><Fit w={81}>Cancel</Fit></div>
          <div className="ml-[18px] flex h-[52px] w-[220px] border-2 border-[#acacac] bg-linear-to-b from-[#f0f0f0] to-[#e5e5e5] pl-[7px]"><Fit w={193}>Environments...</Fit></div>
          <div className="ml-[18px] flex h-[52px] w-[240px] border-2 border-[#acacac] bg-linear-to-b from-[#f0f0f0] to-[#e5e5e5] pl-[28px]"><Fit w={174}>{'Show Help >>'}</Fit></div>
        </div>
      </div>
    </div>
  );
}

function Taskbar() {
  return (
    <div className="relative flex h-[88px] w-full shrink-0 overflow-hidden border-t-[2px] border-[#a08d68] bg-[#5b4a2c]">
      <svg viewBox="1040 0 600 86" className="absolute top-0 left-[1040px] h-[86px] w-[600px]">
        <defs>
          <filter id="wallBlur" x="-.1" y="-.2" width="1.200" height="1.400"><feTurbulence type="fractalNoise" baseFrequency=".03" numOctaves="3" seed="5" /><feDisplacementMap in="SourceGraphic" scale="14" /><feGaussianBlur stdDeviation="1.500" /></filter>
        </defs>
        <g filter="url(#wallBlur)">
          <path d="M1065 -5L1100 20 1125 40 1150 95 1158 90 1150 50 1225 44 1290 62 1370 92H1625V-5z" fill="#86591f" />
          <path d="M1130 -5L1150 30 1220 40 1250 -5zM1220 -5L1262 40 1400 86 1460 90 1400 -5z" fill="#a86f26" />
          <path d="M1300 -5L1390 40 1370 86 1500 90 1625 -5z" fill="#b2622c" />
          <path d="M1400 -5H1500L1480 50 1500 80 1430 90 1400 30z" fill="#b9603a" />
          <path d="M1510 0L1560 20 1600 90H1500zM1220 50L1290 66 1350 90H1240z" fill="#7a4a24" />
          <path d="M1065 0Q1140 20 1152 90M1090 30Q1130 40 1135 90M1330 0Q1400 30 1440 90M1220 45Q1300 50 1370 90M1612 0Q1600 40 1618 88" fill="none" stroke="#a5873c" strokeWidth="3" />
        </g>
      </svg>
      <svg viewBox="460 0 160 86" className="absolute top-0 left-[460px] h-[86px] w-[160px]"><g fill="#c06a48" opacity=".8"><path d="M466 4l8 4-4 8zM471 16l6 4-3 5zM492 14l4 8 1 6zM603 58l4 3-2 6zM514 80l8 2-3 6z" /></g></svg>
      <div className="relative flex w-full items-center text-white">
        <Svg className="ml-[19px] h-[52px] w-[52px]" vb="0 0 52 52"><path d="M0 7L21 4v21H0zM24 3.500L52 0v25H24zM0 28h21v20.500L0 45zM24 28h28v24l-28-4z" fill="#fff" /></Svg>
        <Svg className="ml-[46px] h-[72px] w-[74px]" vb="0 0 74 72">
          <defs><linearGradient id="ie" x1="0" x2="0" y1="0" y2="1"><stop offset="0" stopColor="#4bc4f4" /><stop offset=".5" stopColor="#7fe9ff" /><stop offset="1" stopColor="#35aee6" /></linearGradient></defs>
          <path d="M73 42H29c1 9 7 14 14 14 6 0 10-2 12-7h17C68 61 57 69 43 69 24 69 11 57 11 38S24 6 43 6c19 0 31 14 30 36zM29 32h27c-1-8-6-13-13-13s-12 5-14 13z" fill="url(#ie)" />
          <path d="M15 46C2 66-1 74 8 70c7-3 12-7 16-11-5 2-9 4-12 4-3-1 0-8 6-17C32 25 51 6 64 4c8-1 6 8 1 17 9-13 10-22 2-22C54-1 30 19 15 46z" fill="#f6b91f" />
        </Svg>
        <div className="ml-[29px] flex h-[86px] w-[125px] items-center justify-center border-2 border-[#a3967e] bg-[#7b6c55]">
          <Svg className="h-[70px] w-[72px]" vb="0 0 72 70">
            <path d="M1 6l4-5h25l4 6h36v60H1z" fill="#e6cb6c" /><path d="M2 3h28v14H2z" fill="#f4e39d" /><path d="M24 7l4-2h20l3 8h-27z" fill="#f5e3a0" /><path d="M38 15l3-4h20l3 4h6v52H1V17h37z" fill="#f5df87" />
            <path d="M8 2h20v4H8zM26 7.500h20v4H26zM44 13h20v4H44z" fill="#fff" /><path d="M9 2h4v4H9z" fill="#3aa648" /><path d="M27 7.500h4v4h-4z" fill="#d8552a" /><path d="M45 13h4v4h-4z" fill="#3a8fd8" />
            <path d="M8 69V48q0-5 6-5h46q6 0 6 5v21H49V59H25v10z" fill="#86c3e2" stroke="#5da5cc" />
          </Svg>
        </div>
        <Svg className="ml-[25px] h-[80px] w-[80px]" vb="0 0 80 80"><rect width="80" height="80" rx="10" fill="#22aeef" /><path d="M66 24L80 40V70q0 10-10 10H40L16 58z" fill="#0496d8" /><path d="M17 20h46l3 6-2 34H16L14 26z" fill="#f6f6f6" /><path d="M15 26h50l-2 16H16z" fill="#dedede" /><path d="M28 32c1 20 23 20 24 0" fill="none" stroke="#1d9fe0" strokeWidth="3" /><circle cx="28" cy="32" r="2" fill="#333" /><circle cx="52" cy="32" r="2" fill="#333" /></Svg>
        <div className="ml-[48px] flex h-[80px] w-[80px] flex-col items-center bg-white text-black">
          <Svg className="h-[51px] w-[58px]" vb="0 0 58 51"><path d="M0 0H22L0 51zM36 0H58V51zM29 19L43 51H34L31 41H20z" fill="#e1251b" /></Svg>
          <div className="text-[25px] leading-[31px] font-semibold"><Fit w={57}>Adobe</Fit></div>
        </div>
        <Svg className="ml-[54px] h-[72px] w-[66px]" vb="0 0 66 72"><path d="M5 40C-3 14 12 4 33 4s36 10 28 36" fill="none" stroke="#f7a51c" strokeWidth="8" /><path d="M4 26Q2 60 18 68V36zM62 26Q64 60 48 68V36z" fill="#ef8b1a" /><rect x="17" y="31" width="12" height="40" rx="4" fill="#6b6866" /><rect x="37" y="31" width="12" height="40" rx="4" fill="#6b6866" /><path d="M23 32v38M43 32v38" stroke="#97928e" strokeWidth="3" /></Svg>
        <div className="ml-[55px] flex h-[80px] w-[80px] flex-col items-center">
          <div className="flex h-[65px] w-[80px] flex-col items-center rounded-[3px] border-[4px] border-white bg-linear-to-b from-[#00a3ea] via-[#0a6fb0] to-[#1d2560] pt-[15px] text-[19px] leading-[22px] font-bold italic">
            <Fit w={62}>lenovo.</Fit>
            <Svg className="h-[8px] w-[72px]" vb="0 0 72 8"><path d="M0 4Q18 0 36 4T72 3Q54 8 36 5T0 5z" fill="#cfe6f5" /></Svg>
          </div>
          <Svg className="h-[15px] w-[52px]" vb="0 0 56 15"><path d="M12 0H44Q45 10 56 15H0Q11 10 12 0z" fill="#fff" /></Svg>
        </div>
        <Svg className="ml-[52px] h-[74px] w-[74px]" vb="0 0 48 48"><circle cx="24" cy="24" r="24" fill="#ffce44" /><path d="M24 24L3.200 12A24 24 0 0 0 24 48L34 30z" fill="#1da362" /><path d="M24 13H45.200A24 24 0 0 0 3.200 12L14 30z" fill="#dd5144" /><path d="M34.400 30L24 48A24 24 0 0 0 45.200 13H24z" fill="#ffce44" /><circle cx="24" cy="24" r="11" fill="#f1f1f1" /><circle cx="24" cy="24" r="8.800" fill="#4c8bf5" /></Svg>
        <div className="ml-[53px] flex h-[75px] w-[75px] items-center justify-center bg-[#008a00]"><Svg className="h-[54px] w-[48px]" vb="0 0 48 54"><path d="M0 18L48 8V54L0 45z" fill="#fff" /><path d="M10 15C10-2 28-4 30 12M17 14C17 2 33-4 34 10" fill="none" stroke="#fff" strokeWidth="2" /><path d="M8 23l10-1.600V30H8zM20 21l12-2v11H20zM8 32h10v9L8 40zM20 32h12v11l-12-2z" fill="#008a00" /></Svg></div>
        <div className="ml-[51px] flex h-[80px] w-[80px] items-center justify-center border border-t-2 border-[#e6c8c8] border-t-[#33201a] bg-linear-to-b from-[#e60f14] to-[#b80000]"><Svg className="h-[54px] w-[48px]" vb="0 0 48 54"><path d="M24 2L46 14V40L24 52 2 40V14zM24 46V27M6 17L24 27 42 17" fill="none" stroke="#fff" strokeWidth="2.600" /></Svg></div>
        <Svg className="ml-[48px] h-[80px] w-[80px]" vb="0 0 80 80">
          <defs><linearGradient id="edgeA" x1="0" x2="1" y1=".2" y2=".5"><stop offset="0" stopColor="#2fa9ee" /><stop offset=".5" stopColor="#2cc4d3" /><stop offset="1" stopColor="#6be15e" /></linearGradient><linearGradient id="edgeB" x1="0" x2=".6" y1="0" y2="1"><stop offset="0" stopColor="#1c8fdd" /><stop offset="1" stopColor="#0b6fd0" /></linearGradient></defs>
          <path d="M1 36C3 12 21 0 41 0 64 0 80 17 80 35 80 47 71 54 60 54 51 54 46 50 48 46 54 38 50 20 32 19 16 18 4 26 1 36z" fill="url(#edgeA)" />
          <path d="M0 42C0 26 13 19 27 19 40 19 50 30 50 40 46 24 24 34 23 50 22 66 34 79 45 79 18 84 0 64 0 42z" fill="url(#edgeB)" />
          <path d="M30 33C18 48 22 76 42 80 56 80 68 73 75 61 76 59 74 58 72 59 52 68 32 54 30 33z" fill="#1056a3" />
        </Svg>
        <div className="ml-[26px] flex h-[86px] w-[125px] items-center justify-center border-2 border-[#c9a084] bg-[#fff]/15">
          <Svg className="h-[70px] w-[58px]" vb="0 0 58 70"><path d="M1 0H56V60L58 64V70H0V64L1 60z" fill="#cfe3f4" /><path d="M1 0H56V8H1z" fill="#3f6fa3" /><path d="M3 9H54L56 62H2z" fill="#e4f0f9" /><path d="M4 34L16 12H21L33 34H24L23 30H14L12 34zM16 26H21L19 18z" fill="#f3862a" fillRule="evenodd" /><path d="M33 15H51M33 19.500H51M33 24H51M33 28H51" stroke="#3d7dc0" strokeWidth="2" /><path d="M6 42H51M6 46.500H48M6 51H51M6 56H45" stroke="#a3a9b8" strokeWidth="1.800" /><path d="M0 63H58V70H0z" fill="#86a7c4" /></Svg>
        </div>
        <div className="ml-[3px] flex h-[86px] w-[120px] items-center justify-center border-2 border-[#f1e4da] bg-[#fff]/40"><ArcGlobe id="agTask" className="h-[77px] w-[77px]" /></div>
        <div className="ml-[2px] h-[86px] w-[3px] bg-[#f1e4da]" />
        <Svg className="ml-[685px] h-[36px] w-[60px]" vb="0 0 60 36"><rect x="1" y="1" width="58" height="34" rx="3" fill="#fff" /><path d="M4.500 5H55.500V31H4.500z" fill="#3a2f1c" /><path d="M7 10H53M7 17.500H53" stroke="#fff" strokeWidth="5.500" strokeDasharray="6.500 1.600" /><path d="M7 26H15M17 26H44M46 26H53" stroke="#fff" strokeWidth="5.500" /></Svg>
        <div className="ml-[34px] flex h-[52px] w-[101px] shrink-0 items-center border-[5px] border-white bg-[#474747]">
          <div className="flex h-[38px] w-[47px] items-center bg-[#00cc66] pl-[19px] text-[29px] leading-[36px]"><Fit w={57} className="-mt-[2px]">46%</Fit></div>
        </div>
        <div className="h-[24px] w-[8px] bg-white" />
        <Svg className="ml-[72px] mt-[46px] h-[11px] w-[20px]" vb="0 0 20 11"><path d="M10 0L20 11H0z" fill="#f1f1f4" /></Svg>
        <Svg className="ml-[69px] mt-[6px] h-[40px] w-[42px]" vb="0 0 40 40"><circle cx="20" cy="20" r="19" fill="#777" stroke="#b5b5b5" strokeWidth="1.500" /><circle cx="20" cy="20" r="11" fill="none" stroke="#fff" strokeWidth="3" /><circle cx="20" cy="20" r="13" fill="none" stroke="#fff" strokeWidth="2" strokeDasharray="1.500 1.500" /><path d="M10 16L20 20 30 16M20 20V31" stroke="#fff" strokeWidth="3" fill="none" /></Svg>
        <Svg className="ml-[19px] mt-[6px] h-[40px] w-[40px]" vb="0 0 40 40"><path d="M3 1V38" stroke="#fff" strokeWidth="4" /><path d="M7 2C14 2 16 3 21 5L24 13 38 15 32 24H24L20 20 7 21z" fill="#f4f4f4" /><circle cx="30" cy="30" r="9.500" fill="#e81010" /><path d="M26 25.500L34 34.500M34 25.500L26 34.500" stroke="#fff" strokeWidth="2.800" /></Svg>
        <div className="ml-[21px] mt-[4px] flex h-[30px] items-end gap-[2px]">
          <div className="h-[6px] w-[6px] bg-white" /><div className="h-[11px] w-[6px] bg-white" /><div className="h-[17px] w-[6px] bg-white" /><div className="h-[23px] w-[6px] bg-white" /><div className="h-[29px] w-[6px] bg-white" />
        </div>
        <Svg className="ml-[21px] mt-[4px] h-[38px] w-[40px]" vb="0 0 40 38"><path d="M1 12H7L18 1V37L7 26H1z" fill="#fff" stroke="#3a2f1c" strokeWidth=".8" /><path d="M22 14Q25 19 22 24M27 9Q33 19 27 29M32 5Q42 19 32 33" fill="none" stroke="#e6dfd2" strokeWidth="1.800" /></Svg>
        <div className="ml-[31px] mt-[4px] text-[28px] leading-[36px]"><Fit w={57}>ENG</Fit></div>
        <div className="ml-[36px] mt-[4px] flex flex-col items-center text-[29px] leading-[42px]"><Fit w={69}>19:45</Fit><Fit w={150}>27/03/2021</Fit></div>
      </div>
    </div>
  );
}

export default function App() {
  return (
    <div className={`relative flex h-[1800px] w-[3200px] flex-col overflow-hidden bg-[#f0f0f0] text-black ${UI}`}>
      <div className="flex h-[58px] shrink-0 items-start border-b border-[#d5d5d5] bg-[#ebebeb]">
        <ArcGlobe id="agTitle" className="mt-[9px] ml-[2px] h-[40px] w-[41px]" />
        <div className="ml-[1410px] mt-[4px] text-[35px] leading-[54px] text-[#262626]"><Fit w={294}>Untitled - ArcMap</Fit></div>
        <div className="mt-[29px] ml-[1226px] h-[3px] w-[16px] bg-[#262626]" />
        <Svg className="mt-[17px] ml-[50px] h-[17px] w-[18px]" vb="0 0 18 17"><path d="M3 1.200H17V12M1 5H15V15.500H1z" fill="none" stroke="#262626" strokeWidth="2.600" /></Svg>
        <div className="ml-[24px] flex h-[51px] w-[116px] items-center justify-center bg-[#bcbcbc]"><Svg className="h-[12px] w-[14px]" vb="0 0 14 12"><path d="M1 .5l12 11M13 .5L1 11.500" stroke="#fff" strokeWidth="2" /></Svg></div>
      </div>
      <div className="flex min-h-0 flex-1 flex-col bg-linear-to-r from-[#f0f0f0] to-[#fbfbfb] to-85%">
        <div className="flex h-[63px] shrink-0 items-center pl-[30px] text-[30px] leading-[60px]">
          <Fit w={46}>File</Fit>
          <Fit w={50} className="ml-[39px]">Edit</Fit>
          <Fit w={63} className="ml-[40px]">View</Fit>
          <Fit w={148} className="ml-[40px]">Bookmarks</Fit>
          <Fit w={73} className="ml-[40px]">Insert</Fit>
          <Fit w={120} className="ml-[39px]">Selection</Fit>
          <Fit w={190} className="ml-[40px]">Geoprocessing</Fit>
        </div>
        <div className="h-[129px] w-[1400px] shrink-0 overflow-hidden">
          <TopToolbar />
          <ToolsToolbar />
        </div>
        <div className="flex h-[1414px] shrink-0">
          <Toc />
          <MapView />
          <div className="ml-[8px] flex flex-col pt-[5px]">
            <SideTab label="Catalog" h={105} className="h-[179px]"><path d="M8 7L12 5h6V15L14 17 8 15z" fill="#dcc52c" stroke="#8a7a12" strokeWidth=".6" /><path d="M12 8h4M12 11h4" stroke="#6d6010" /><path d="M2.500 16L8 13l3 2-5 3.500z" fill="#e8d548" stroke="#8a7a12" strokeWidth=".6" /><ellipse cx="8" cy="13.500" rx="3" ry="1.800" fill="#3b8f8f" /></SideTab>
            <SideTab label="Search" h={97} className="h-[169px]"><path d="M3 6h14v2.500H3z" fill="#cfe3f8" stroke="#888" strokeWidth=".7" /><circle cx="11.500" cy="14.500" r="5" fill="#2f7fc0" /><path d="M11 12l4-1 1 4-3 3-2-2z" fill="#6dba4c" /></SideTab>
            <SideTab label="ArcToolbox" h={151} className="mt-[33px] h-[223px]"><path d="M3 9L10 5.500 17.500 8.500V14L11.500 18 3 14.500z" fill="#c93225" stroke="#7c1a12" strokeWidth=".7" /><path d="M3 10L11.500 12.500 17.500 10M8 7L12 8.500" stroke="#5f130c" fill="none" /><circle cx="7.500" cy="12" r="1" fill="#ddd" /></SideTab>
          </div>
        </div>
        <div className="flex flex-1 items-center border-t-2 border-[#f6f6f6] bg-[#f0f0f0] text-[30px] leading-[40px]">
          <div className="ml-[2504px] h-full w-[3px] bg-[#f4f4f4]" />
          <div className="ml-[46px] h-full w-[3px] bg-[#f4f4f4]" />
          <Fit w={413} className="ml-[11px]">375915.893  2132974.301 Meters</Fit>
        </div>
      </div>
      <Taskbar />
      <Dialog />
    </div>
  );
}
